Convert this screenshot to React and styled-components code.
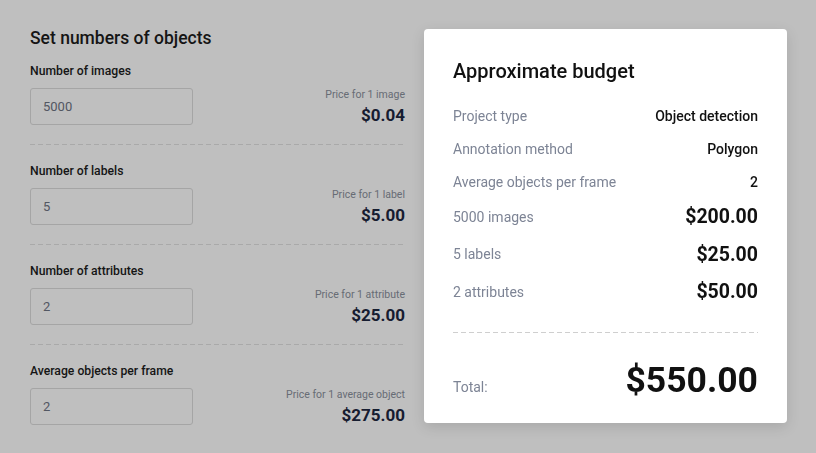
import styled, { createGlobalStyle } from "styled-components";

const GlobalStyle = createGlobalStyle`
  * { box-sizing: border-box; }
  body {
    margin: 0;
    background: #ffffff;
    font-family: Roboto, "Liberation Sans", Arial, sans-serif;
  }
`;

const fields = [
  { label: "Number of images", value: "5000", unit: "Price for 1 image", price: "$0.04" },
  { label: "Number of labels", value: "5", unit: "Price for 1 label", price: "$5.00" },
  { label: "Number of attributes", value: "2", unit: "Price for 1 attribute", price: "$25.00" },
  { label: "Average objects per frame", value: "2", unit: "Price for 1 average object", price: "$275.00" },
];

const details = [
  { name: "Project type", value: "Object detection" },
  { name: "Annotation method", value: "Polygon" },
  { name: "Average objects per frame", value: "2" },
  { name: "5000 images", value: "$200.00", money: true },
  { name: "5 labels", value: "$25.00", money: true },
  { name: "2 attributes", value: "$50.00", money: true },
];

const App = () => {
  return (
    <>
      <GlobalStyle />
      <Page>
        <Form>
          <Heading>Set numbers of objects</Heading>
          {fields.map((f, i) => (
            <Section key={f.label} last={i === fields.length - 1}>
              <FieldLabel>{f.label}</FieldLabel>
              <FieldRow>
                <NumberInput value={f.value} readOnly />
                <PriceBlock>
                  <PriceUnit>{f.unit}</PriceUnit>
                  <PriceValue>{f.price}</PriceValue>
                </PriceBlock>
              </FieldRow>
            </Section>
          ))}
        </Form>
        <Dim />
        <Card>
          <CardTitle>Approximate budget</CardTitle>
          {details.map((d) => (
            <DetailRow key={d.name} money={d.money}>
              <DetailName>{d.name}</DetailName>
              <DetailValue money={d.money}>{d.value}</DetailValue>
            </DetailRow>
          ))}
          <Dashes />
          <TotalRow>
            <DetailName>Total:</DetailName>
            <TotalValue>$550.00</TotalValue>
          </TotalRow>
        </Card>
      </Page>
    </>
  );
};

const Page = styled.div`
  display: grid;
  grid-template-columns: 375px 363px;
  column-gap: 19px;
  align-items: start;
  padding: 28px 0 0 30px;
  height: 453px;
  overflow: hidden;
`;

const Dim = styled.div`
  position: fixed;
  inset: 0;
  background: rgba(0, 0, 0, 0.25);
  z-index: 1;
`;

const Form = styled.div`
  display: flex;
  flex-direction: column;
`;

const Heading = styled.h2`
  margin: 0 0 15px;
  font-size: 17.5px;
  line-height: 20px;
  font-weight: 500;
  color: #1c1c1c;
`;

const Section = styled.div`
  display: flex;
  flex-direction: column;
  gap: 9px;
  padding-bottom: 20px;
  margin-bottom: 18px;
  background-image: ${(p) =>
    p.last ? "none" : "repeating-linear-gradient(to right, #e2e2e2 0 5px, transparent 5px 8px)"};
  background-size: 100% 1px;
  background-repeat: no-repeat;
  background-position: bottom left;
`;

const FieldLabel = styled.div`
  font-size: 12.2px;
  line-height: 16px;
  font-weight: 500;
  color: #1c1c1c;
`;

const FieldRow = styled.div`
  display: flex;
  justify-content: space-between;
  align-items: flex-start;
`;

const NumberInput = styled.input`
  width: 163px;
  height: 37px;
  padding: 0 12px;
  border: 1px solid #dcdcdc;
  border-radius: 3px;
  background: #ffffff;
  font-family: inherit;
  font-size: 13px;
  color: #6e7483;
  outline: none;
`;

const PriceBlock = styled.div`
  display: flex;
  flex-direction: column;
  align-items: flex-end;
  gap: 4px;
`;

const PriceUnit = styled.span`
  font-size: 10.5px;
  line-height: 13px;
  color: #8a909c;
`;

const PriceValue = styled.span`
  font-size: 17px;
  line-height: 20px;
  font-weight: 700;
  color: #1e2741;
`;

const Card = styled.div`
  position: relative;
  z-index: 2;
  margin-top: 1px;
  height: 394px;
  padding: 30px 29px 0;
  background: #ffffff;
  border-radius: 4px;
  box-shadow: 0 4px 14px rgba(0, 0, 0, 0.12);
`;

const CardTitle = styled.h3`
  margin: 0 0 16px;
  font-size: 20px;
  line-height: 24px;
  font-weight: 500;
  color: #111111;
`;

const DetailRow = styled.div`
  display: flex;
  justify-content: space-between;
  align-items: center;
  height: ${(p) => (p.money ? "37.5px" : "33px")};
`;

const DetailName = styled.span`
  font-size: 14px;
  color: #7d8495;
`;

const DetailValue = styled.span`
  font-size: ${(p) => (p.money ? "19.5px" : "14px")};
  font-weight: ${(p) => (p.money ? 700 : 500)};
  color: #111111;
`;

const Dashes = styled.div`
  height: 1px;
  margin: 21px 0 0;
  background: repeating-linear-gradient(to right, #cfcfcf 0 5px, transparent 5px 8px);
`;

const TotalRow = styled.div`
  display: flex;
  justify-content: space-between;
  align-items: baseline;
  margin-top: 27px;
`;

const TotalValue = styled.span`
  font-size: 35.5px;
  line-height: 40px;
  font-weight: 700;
  color: #111111;
`;

export default App;
